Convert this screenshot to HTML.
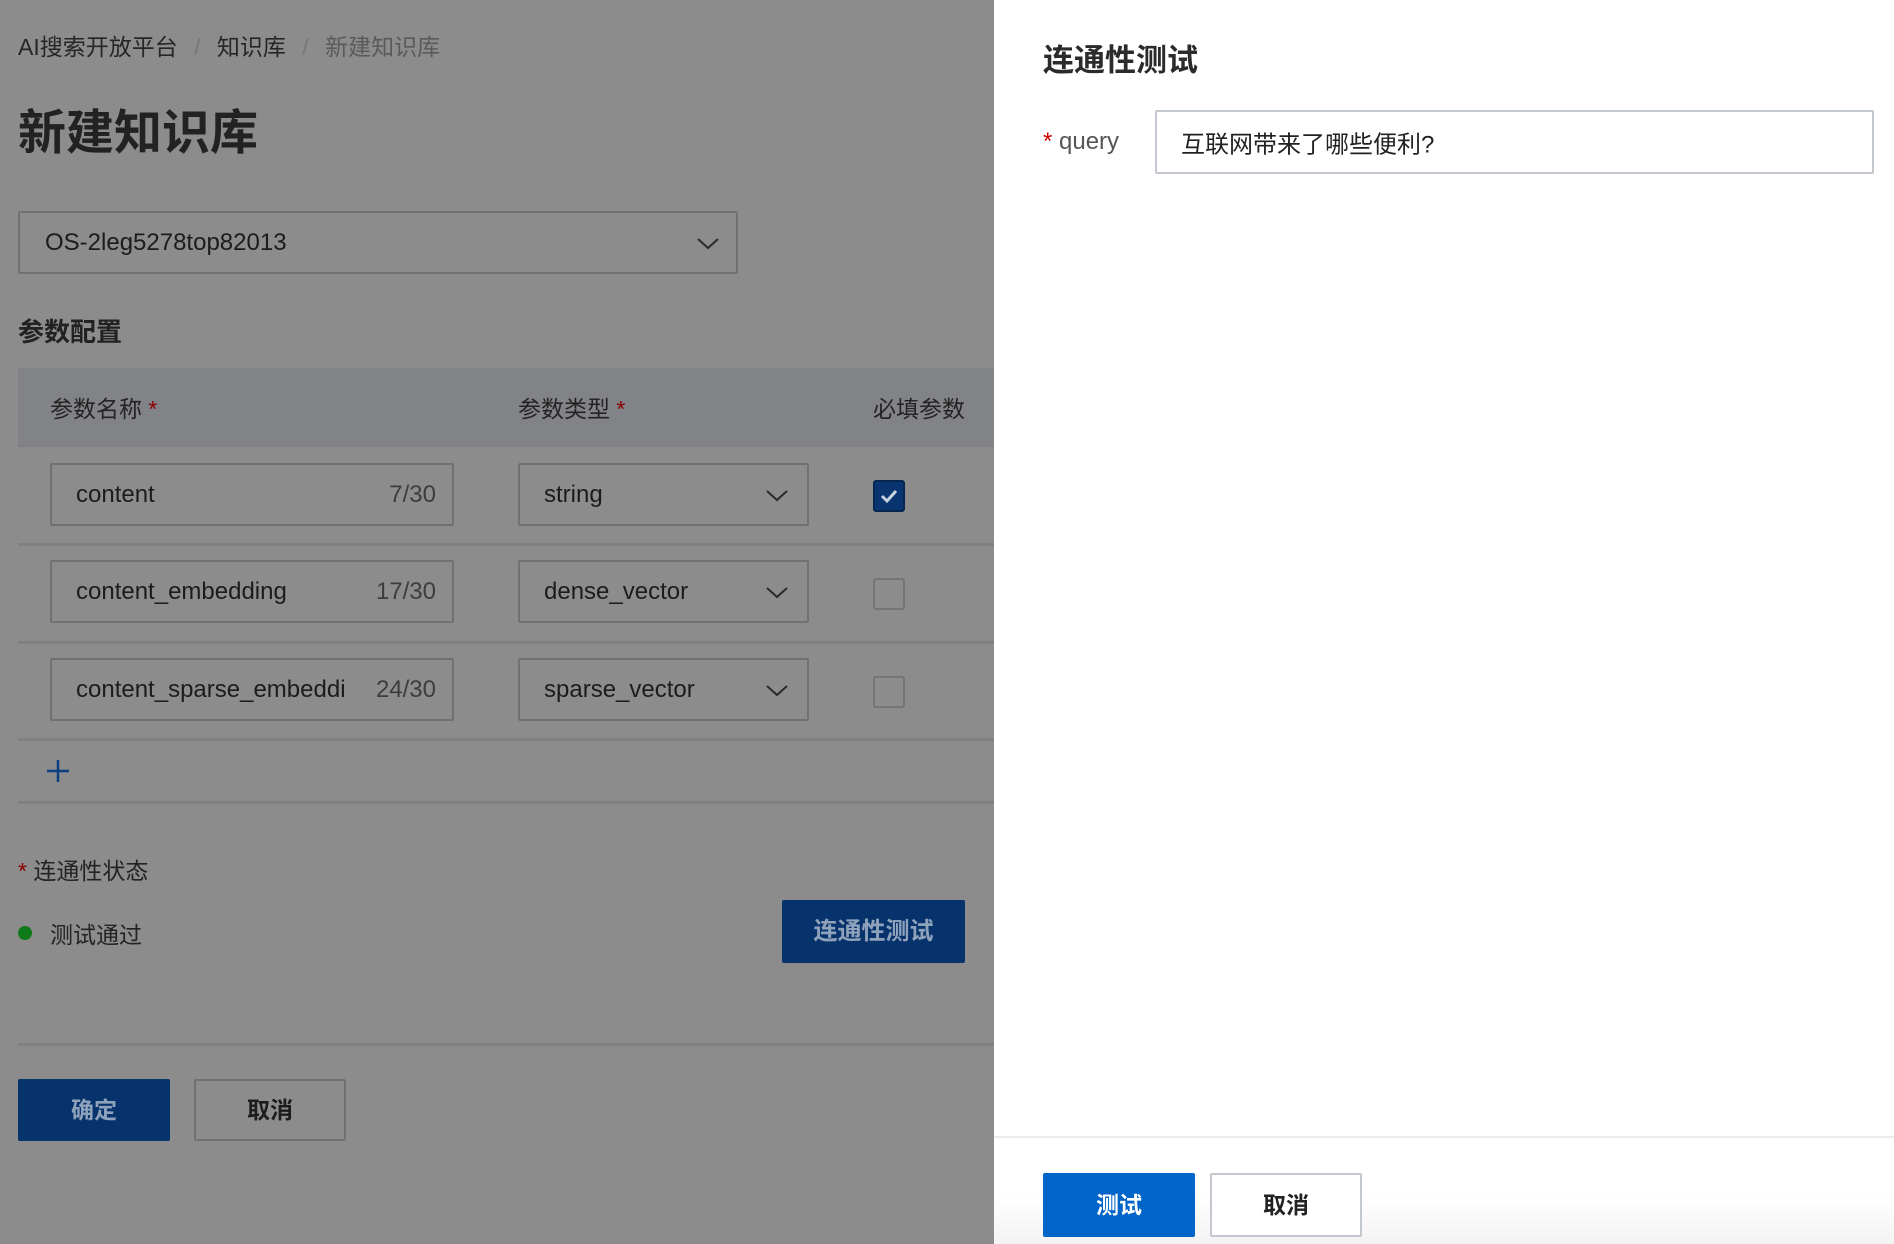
<!DOCTYPE html>
<html><head><meta charset="utf-8"><style>
*{box-sizing:border-box;margin:0;padding:0}
body{width:1894px;height:1244px;position:relative;overflow:hidden;background:#8c8c8c;font-family:"Liberation Sans","Noto Sans CJK SC",sans-serif;color:#1f1f1f}
.a{position:absolute;white-space:nowrap}
.box{position:absolute;border:2px solid #6f7174;border-radius:2px}
.t{position:absolute;font-size:24px;color:#1c1c1c;top:50%;transform:translateY(-50%)}
.chev{position:absolute;right:18px;top:50%;margin-top:-10px}
.line{position:absolute;left:18px;width:976px;height:3px;background:#7f8083}
</style></head><body>
<div class="a" style="left:18px;top:28px;font-size:23px;color:#262626">AI搜索开放平台 <span style="color:#777;margin:0 10px">/</span> 知识库 <span style="color:#777;margin:0 10px">/</span> <span style="color:#5a5a5a">新建知识库</span></div>
<div class="a" style="left:18px;top:93px;font-size:48px;font-weight:bold;color:#222">新建知识库</div>
<div class="box" style="left:18px;top:211px;width:720px;height:63px"><span class="t" style="left:25px">OS-2leg5278top82013</span><svg class="chev" style="right:16px" width="24" height="20" viewBox="0 0 24 20"><path d="M2 6l10 9 10-9" fill="none" stroke="#2a2a2a" stroke-width="2"/></svg></div>
<div class="a" style="left:18px;top:312px;font-size:26px;font-weight:bold;color:#222">参数配置</div>
<div class="a" style="left:18px;top:368px;width:976px;height:77px;background:#828387"></div>
<div class="line" style="top:444px"></div>
<div class="a" style="left:50px;top:390px;font-size:23px;color:#232323">参数名称 <span style="color:#8b0000">*</span></div>
<div class="a" style="left:518px;top:390px;font-size:23px;color:#232323">参数类型 <span style="color:#8b0000">*</span></div>
<div class="a" style="left:873px;top:390px;font-size:23px;color:#232323">必填参数</div>

<div class="box" style="left:50px;top:463px;width:404px;height:63px"><span class="t" style="left:24px">content</span><span class="t" style="right:16px;color:#3d3d3d">7/30</span></div>
<div class="box" style="left:518px;top:463px;width:291px;height:63px"><span class="t" style="left:24px">string</span><svg class="chev" width="24" height="20" viewBox="0 0 24 20"><path d="M2 6l10 9 10-9" fill="none" stroke="#2a2a2a" stroke-width="2"/></svg></div>
<div class="a" style="left:873px;top:480px;width:32px;height:32px;background:#083570;border:2px solid #052650;border-radius:3px"><svg width="28" height="28" viewBox="0 0 28 28"><path d="M7 14l5 5 9-10" fill="none" stroke="#c8d2e0" stroke-width="3"/></svg></div>
<div class="line" style="top:543px"></div>

<div class="box" style="left:50px;top:560px;width:404px;height:63px"><span class="t" style="left:24px">content_embedding</span><span class="t" style="right:16px;color:#3d3d3d">17/30</span></div>
<div class="box" style="left:518px;top:560px;width:291px;height:63px"><span class="t" style="left:24px">dense_vector</span><svg class="chev" width="24" height="20" viewBox="0 0 24 20"><path d="M2 6l10 9 10-9" fill="none" stroke="#2a2a2a" stroke-width="2"/></svg></div>
<div class="a" style="left:873px;top:578px;width:32px;height:32px;border:2px solid #737578;border-radius:3px"></div>
<div class="line" style="top:641px"></div>

<div class="box" style="left:50px;top:658px;width:404px;height:63px"><span class="t" style="left:24px;width:270px;overflow:hidden">content_sparse_embedding</span><span class="t" style="right:16px;color:#3d3d3d">24/30</span></div>
<div class="box" style="left:518px;top:658px;width:291px;height:63px"><span class="t" style="left:24px">sparse_vector</span><svg class="chev" width="24" height="20" viewBox="0 0 24 20"><path d="M2 6l10 9 10-9" fill="none" stroke="#2a2a2a" stroke-width="2"/></svg></div>
<div class="a" style="left:873px;top:676px;width:32px;height:32px;border:2px solid #737578;border-radius:3px"></div>
<div class="line" style="top:738px"></div>
<svg class="a" style="left:46px;top:759px" width="24" height="24" viewBox="0 0 24 24"><path d="M12 1v22M1 12h22" stroke="#0b3f80" stroke-width="2.5"/></svg>
<div class="line" style="top:801px"></div>

<div class="a" style="left:18px;top:852px;font-size:23px;color:#232323"><span style="color:#8b0000">*</span> 连通性状态</div>
<div class="a" style="left:18px;top:926px;width:14px;height:14px;border-radius:50%;background:#0e7a1a"></div>
<div class="a" style="left:50px;top:916px;font-size:23px;color:#232323">测试通过</div>
<div class="a" style="left:782px;top:900px;width:183px;height:63px;background:#07336c;border-radius:2px;color:#8fa2bb;font-size:24px;font-weight:bold;text-align:center;line-height:63px">连通性测试</div>
<div class="line" style="top:1043px"></div>
<div class="a" style="left:18px;top:1079px;width:152px;height:62px;background:#07336c;border-radius:2px;color:#8fa2bb;font-size:23px;font-weight:bold;text-align:center;line-height:62px">确定</div>
<div class="a" style="left:194px;top:1079px;width:152px;height:62px;border:2px solid #6f7174;border-radius:2px;color:#1c1c1c;font-size:23px;font-weight:bold;text-align:center;line-height:58px">取消</div>

<div class="a" style="left:994px;top:0;width:900px;height:1244px;background:#fff"></div>
<div class="a" style="left:1043px;top:35px;font-size:31px;font-weight:bold;color:#2b2b2b">连通性测试</div>
<div class="a" style="left:1043px;top:128px;font-size:24px;color:#555"><span style="color:#c00">*</span> query</div>
<div class="box" style="left:1155px;top:110px;width:719px;height:64px;border-color:#c3c7ce"><span class="t" style="left:24px;color:#222;font-size:24px">互联网带来了哪些便利?</span></div>
<div class="a" style="left:994px;top:1136px;width:900px;height:2px;background:#ececec"></div>
<div class="a" style="left:994px;top:1138px;width:900px;height:106px;background:linear-gradient(#fff 55%,#f3f3f4)"></div>
<div class="a" style="left:1043px;top:1173px;width:152px;height:64px;background:#0064c8;border-radius:2px;color:#fff;font-size:23px;font-weight:bold;text-align:center;line-height:64px">测试</div>
<div class="a" style="left:1210px;top:1173px;width:152px;height:64px;background:#fff;border:2px solid #c3c7ce;border-radius:2px;color:#222;font-size:23px;font-weight:bold;text-align:center;line-height:60px">取消</div>
</body></html>
